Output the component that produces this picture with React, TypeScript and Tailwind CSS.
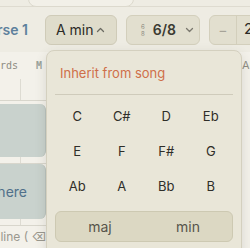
import React from 'react';

const KEYS = ['C', 'C#', 'D', 'Eb', 'E', 'F', 'F#', 'G', 'Ab', 'A', 'Bb', 'B'];

const ChevronUp = () => (
  <svg width="9" height="6" viewBox="0 0 9 6" fill="none" stroke="#6b6a62" strokeWidth="1.3" strokeLinecap="round" strokeLinejoin="round">
    <path d="M1.5 4.5 4.5 1.5 7.5 4.5" />
  </svg>
);

const ChevronDown = () => (
  <svg width="9" height="6" viewBox="0 0 9 6" fill="none" stroke="#7a786e" strokeWidth="1.3" strokeLinecap="round" strokeLinejoin="round">
    <path d="M1.5 1.5 4.5 4.5 7.5 1.5" />
  </svg>
);

const KeyPopover: React.FC = () => (
  <div className="absolute left-[46px] top-[50px] w-[196px] h-[210px] rounded-lg border border-[#d4d0bf] bg-[#e9e6d8] shadow-[0_4px_12px_rgba(60,55,40,0.14)] px-2 pt-[9px]">
    <div className="h-[28px] flex items-center px-[5px] text-[13px] text-[#cf6f49] whitespace-nowrap">
      Inherit from song
    </div>
    <div className="mt-[6px] border-t border-[#cfcbbb]" />
    <div className="mt-[4px] grid grid-cols-4">
      {KEYS.map((k) => (
        <div key={k} className="h-[35px] flex items-center justify-center text-[13px] text-[#2f2e29]">
          {k}
        </div>
      ))}
    </div>
    <div className="mt-[7px] h-[31px] flex rounded-md border border-[#cdc9b2] bg-[#dcd8c3] text-[14px] text-[#57544b]">
      <div className="flex-1 flex items-center justify-center">maj</div>
      <div className="flex-1 flex items-center justify-center">min</div>
    </div>
  </div>
);

const RowGap = () => (
  <div className="h-[7px] border-b border-[#d8d6cc]">
    <div className="ml-[20px] h-full border-l border-[#dddbd2]" />
  </div>
);

export default function App() {
  return (
    <div
      className="relative w-[250px] h-[248px] overflow-hidden bg-[#eeece3]"
      style={{ fontFamily: 'Inter, "Noto Sans", sans-serif' }}
    >
      {/* top strip with the bottom of another menu */}
      <div className="h-[7px] border-b border-[#dedbd0]" />
      <div className="absolute left-[28px] top-[-10px] w-[106px] h-[17px] rounded-b-lg border border-[#dcd9cd] bg-[#f2f0e8]" />

      {/* toolbar */}
      <div className="h-[45px] flex items-center whitespace-nowrap">
        <div className="w-[28px] shrink-0 flex justify-end overflow-hidden">
          <span className="text-[14px] font-semibold text-[#5d809c]">Verse 1</span>
        </div>
        <div className="ml-[17px] w-[72px] shrink-0 h-[30px] flex items-center justify-between pl-[10px] pr-[11px] rounded-md border border-[#cfcbb8] bg-[#dfdccb]">
          <span className="text-[14px] text-[#2b2a26]">A min</span>
          <ChevronUp />
        </div>
        <div className="ml-[9px] w-[74px] shrink-0 h-[30px] flex items-center pl-[14px] rounded-md border border-[#d3cfbc] bg-[#e2dfcf]">
          <div className="flex flex-col leading-[7px] text-[6px] text-[#8a887d]">
            <span>6</span>
            <span>8</span>
          </div>
          <span className="ml-[8px] text-[14px] font-semibold text-[#3b3a32]">6/8</span>
          <span className="ml-[9px]"><ChevronDown /></span>
        </div>
        <div className="ml-[9px] w-[70px] shrink-0 h-[30px] flex items-center rounded-md border border-[#d3cfbc] bg-[#e2dfcf]">
          <div className="w-[27px] h-full flex items-center justify-center border-r border-[#d3cfbc] text-[14px] text-[#a6a398]">−</div>
          <span className="ml-[7px] text-[15px] text-[#2b2a26]">2</span>
        </div>
      </div>

      {/* song content */}
      <div className="bg-[#f3f1ea] h-full">
        <div className="h-[27px] flex items-center text-[10px] text-[#8e8c83] whitespace-nowrap" style={{ fontFamily: '"DejaVu Sans Mono", monospace' }}>
          <div className="w-[18px] shrink-0 flex justify-end overflow-hidden">
            <span>Words</span>
          </div>
          <span className="ml-[18px] font-bold text-[#9aa29a]">M</span>
          <span className="ml-auto mr-[-6px] text-[11px] text-[#8e8c83]" style={{ fontFamily: 'Inter, sans-serif' }}>Au</span>
        </div>
        <div className="w-[46px]">
          <div className="h-[22px] border-b border-[#d8d6cc]">
            <div className="ml-[20px] h-full border-l border-[#dddbd2]" />
          </div>
          <div className="h-[3px]" />
          <div className="h-[53px] rounded-r-md bg-[#c9d2cd] border-r border-[#b9c3be]" />
          <RowGap />
          <div className="h-[55px] flex items-center rounded-r-md bg-[#c9d2cd] border-r border-[#b9c3be]">
            <div className="w-[27px] flex justify-end overflow-hidden">
              <span className="whitespace-nowrap text-[14px] text-[#50708a]">Add here</span>
            </div>
          </div>
          <RowGap />
          <div className="h-[20px] flex items-end overflow-hidden">
            <div className="w-[46px] flex justify-end overflow-hidden">
              <span className="whitespace-nowrap text-[12px] text-[#9a988e]">new line ( ⌫</span>
            </div>
          </div>
        </div>
      </div>

      <KeyPopover />
    </div>
  );
}
